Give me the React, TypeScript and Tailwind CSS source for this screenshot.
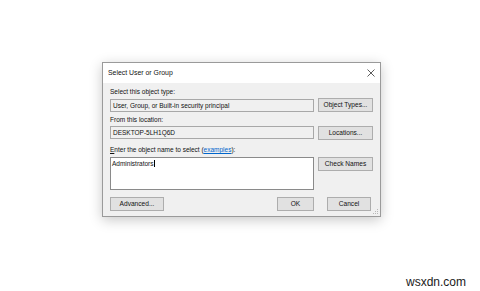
import React from "react";

function CloseGlyph() {
  return (
    <svg width="8" height="8" viewBox="0 0 8 8" className="text-[#333]">
      <path d="M0.5 0.5l7 7M7.5 0.5l-7 7" stroke="currentColor" strokeWidth="0.8" />
    </svg>
  );
}

function Grip() {
  const dots = [
    [5, 1],
    [3, 3],
    [5, 3],
    [1, 5],
    [3, 5],
    [5, 5],
  ];
  return (
    <svg width="7" height="7" viewBox="0 0 7 7" className="absolute bottom-[1px] right-[1px]">
      {dots.map(([x, y], i) => (
        <rect key={i} x={x} y={y} width="1" height="1" fill="#b8b8b8" />
      ))}
    </svg>
  );
}

function Btn({ label, w }: { label: string; w: string }) {
  return (
    <div
      className={`${w} flex h-[14px] shrink-0 items-center justify-center border border-[#adadad] bg-[#e1e1e1] text-[6.6px] text-[#111]`}
    >
      {label}
    </div>
  );
}

export default function App() {
  return (
    <div
      className="relative h-[291px] w-[480px] overflow-hidden bg-white pl-[102px] pt-[62px]"
      style={{ fontFamily: '"Liberation Sans", Arial, sans-serif' }}
    >
      <div className="relative w-[279px] border border-[#9a9a9a] bg-[#f0f0f0] shadow-[0_3px_12px_rgba(0,0,0,0.22)]">
        {/* title bar */}
        <div className="flex h-[20px] items-center justify-between bg-white pl-[5px] pr-[5px]">
          <span className="text-[6.9px] text-[#111]">Select User or Group</span>
          <CloseGlyph />
        </div>

        <div className="px-[7px] pb-[5px] pt-[4px] text-[6.5px] text-[#111]">
          <div className="h-[10px] leading-[10px]">Select this object type:</div>
          <div className="mt-[1px] flex h-[14px] items-end justify-between">
            <div className="flex h-[13px] w-[204px] items-center border border-[#a8a8a8] bg-[#f0f0f0] pl-[2px]">
              User, Group, or Built-in security principal
            </div>
            <Btn label="Object Types..." w="w-[55px]" />
          </div>

          <div className="mt-[3px] h-[10px] leading-[10px]">From this location:</div>
          <div className="mt-[1px] flex h-[14px] items-start justify-between">
            <div className="flex h-[13px] w-[204px] items-center border border-[#a8a8a8] bg-[#f0f0f0] pl-[2px]">
              DESKTOP-5LH1Q6D
            </div>
            <Btn label="Locations..." w="w-[55px]" />
          </div>

          <div className="mt-[5px] h-[10px] leading-[10px]">
            <span className="underline">E</span>nter the object name to select (
            <span className="text-[#0066cc] underline">examples</span>):
          </div>
          <div className="mt-[2px] flex items-start justify-between">
            <div className="h-[33px] w-[204px] border border-[#8a8a8a] bg-white pl-[1px] pt-[2px] leading-[8px]">
              Administrators
              <span className="ml-[0.5px] inline-block h-[7px] w-[0.7px] bg-black align-[-1px]" />
            </div>
            <Btn label="Check Names" w="w-[55px]" />
          </div>

          <div className="mt-[7px] flex items-center">
            <Btn label="Advanced..." w="w-[54px]" />
            <div className="flex-1" />
            <Btn label="OK" w="w-[37px]" />
            <div className="w-[13px]" />
            <Btn label="Cancel" w="w-[44px]" />
            <div className="w-[2px]" />
          </div>
        </div>
        <Grip />
      </div>

      <div className="absolute left-[406px] top-[274px] text-[12px] leading-[16px] text-[#1a1a1a]">
        wsxdn.com
      </div>
    </div>
  );
}
